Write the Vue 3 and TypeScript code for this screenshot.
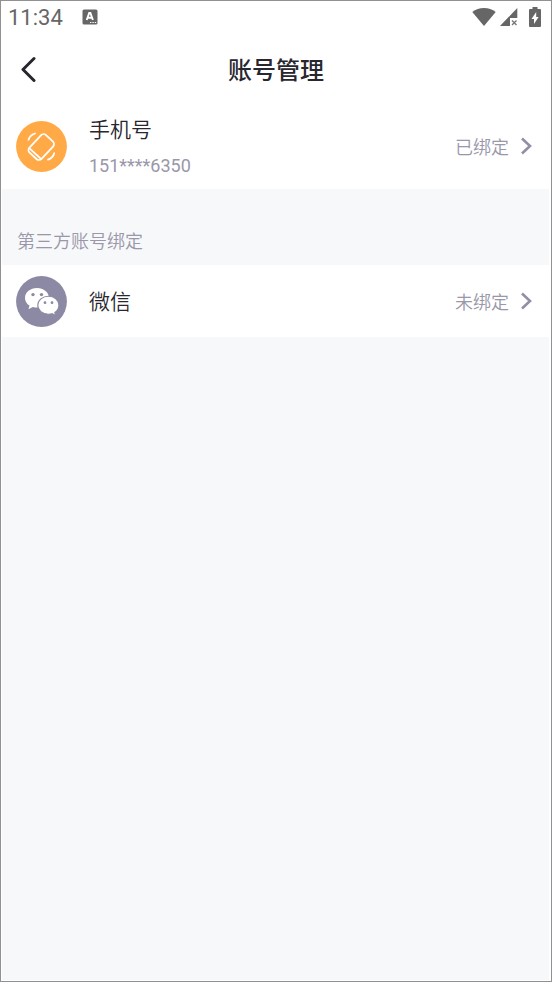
<script setup lang="ts">
interface AccountItem {
  id: 'phone' | 'wechat'
  name: string
  detail?: string
  status: string
}

const phone: AccountItem = { id: 'phone', name: '手机号', detail: '151****6350', status: '已绑定' }
const wechat: AccountItem = { id: 'wechat', name: '微信', status: '未绑定' }
</script>

<template>
  <div class="screen">
    <div class="status-bar">
      <time class="clock">11:34</time>
      <svg class="ime" viewBox="0 0 16 16" aria-hidden="true">
        <rect x="0.5" y="0.5" width="15" height="15" rx="1.5" fill="#666" />
        <path d="M4.700 11 7.200 4h1.200l2.500 7M5.700 8.800h4.200" fill="none" stroke="#fff" stroke-width="1.900" />
        <path d="M8 13h1.400v1H8zM10.400 13h1.400v1h-1.400zM12.800 13h1.400v1h-1.400z" fill="#fff" />
      </svg>
      <svg class="wifi" viewBox="0 0 24 18" aria-hidden="true">
        <path d="M12 18 .3 4C3.600 1.300 7.600 0 12 0s8.400 1.300 11.700 4z" fill="#666" />
      </svg>
      <svg class="signal" viewBox="0 0 18 18" aria-hidden="true">
        <path d="M17.300 0v10H10v8H0z" fill="#666" />
        <path d="m12 12.500 4.500 4.500m0-4.500L12 17" stroke="#777" stroke-width="1.400" />
      </svg>
      <svg class="battery" viewBox="0 0 12 20" aria-hidden="true">
        <path d="M3.500 0h5v2H11q1 0 1 1v16q0 1-1 1H1q-1 0-1-1V3q0-1 1-1h2.500z" fill="#666" />
        <path d="M7.200 5 2.500 12H5v5l4.600-7H7.200z" fill="#fff" />
      </svg>
    </div>

    <header class="nav">
      <button class="back" type="button" aria-label="返回">
        <svg viewBox="0 0 16 26" aria-hidden="true">
          <path d="M14 2.500 3 13.500l11 11" fill="none" stroke="#28272f" stroke-width="3" stroke-linecap="round" stroke-linejoin="round" />
        </svg>
      </button>
      <h1>账号管理</h1>
    </header>

    <main class="content">
      <button class="row row-tall" type="button">
        <svg class="avatar" viewBox="0 0 51 51" aria-hidden="true">
          <circle cx="25.500" cy="25.500" r="25.400" fill="#ffaa47" />
          <g fill="none" stroke="#fff" stroke-width="1.800" stroke-linecap="round" stroke-linejoin="round">
            <rect x="17" y="14" width="16.500" height="24" rx="3.600" transform="rotate(43 25.200 26)" />
            <path d="m13.500 27.300 11.500 10.500M12.500 18.700q1.400-4.600 6.500-6.200M38.200 32.200q-1.200 4.700-6.200 6.400" />
          </g>
        </svg>
        <span class="text">
          <span class="name">{{ phone.name }}</span>
          <span class="detail">{{ phone.detail }}</span>
        </span>
        <span class="state">{{ phone.status }}</span>
        <svg class="chevron" viewBox="0 0 12 18" aria-hidden="true">
          <path d="m2 1.500 8 7.500-8 7.500" fill="none" stroke="#918fa6" stroke-width="2.600" />
        </svg>
      </button>

      <h2>第三方账号绑定</h2>

      <button class="row" type="button">
        <svg class="avatar" viewBox="0 0 51 51" aria-hidden="true">
          <circle cx="25.500" cy="25.500" r="25.400" fill="#8b89a3" />
          <path d="M21 12c-6.700 0-12 4.300-12 9.900 0 3.200 1.700 5.900 4.500 7.700l-1 3.600 4.300-2.200c1.300.4 2.700.600 4.200.600 6.600 0 12-4.200 12-9.700S27.600 12 21 12z" fill="#fff" />
          <path d="M32.400 20.200c-5.900 0-10.600 4-10.600 9s4.700 9 10.600 9c1.300 0 2.500-.2 3.600-.500l3.700 1.900-.900-3.100c2.500-1.700 4.100-4.300 4.100-7.300 0-5-4.700-9-10.500-9z" fill="#fff" stroke="#8b89a3" stroke-width="1.100" />
          <g fill="#8b89a3">
            <circle cx="17" cy="18.600" r="1.700" />
            <circle cx="25.500" cy="18.600" r="1.700" />
            <circle cx="29" cy="26.700" r="1.400" />
            <circle cx="36" cy="26.700" r="1.400" />
          </g>
        </svg>
        <span class="text">
          <span class="name">{{ wechat.name }}</span>
        </span>
        <span class="state">{{ wechat.status }}</span>
        <svg class="chevron" viewBox="0 0 12 18" aria-hidden="true">
          <path d="m2 1.500 8 7.500-8 7.500" fill="none" stroke="#918fa6" stroke-width="2.600" />
        </svg>
      </button>
    </main>
  </div>
</template>

<style>
body {
  margin: 0;
  background: #fff;
}
</style>

<style scoped>
.screen {
  box-sizing: border-box;
  display: flex;
  flex-direction: column;
  min-height: 100vh;
  border: 1px solid #919191;
  background: #fff;
  color: #28272f;
  font-family: Roboto, "Noto Sans CJK SC", sans-serif;
}

.status-bar {
  display: flex;
  align-items: center;
  height: 32px;
  padding: 0 10px 0 7px;
}

.clock {
  margin-right: 19px;
  padding-top: 2px;
  color: #666;
  font-size: 22px;
  font-weight: 400;
  line-height: 30px;
}

.ime {
  width: 16px;
  height: 16px;
}

.wifi {
  width: 24px;
  height: 18px;
  margin-left: auto;
}

.signal {
  width: 18px;
  height: 18px;
  margin-left: 4px;
}

.battery {
  width: 12px;
  height: 20px;
  margin-left: 11px;
}

.nav {
  display: grid;
  grid-template-columns: 56px 1fr 56px;
  align-items: center;
  height: 72px;
}

button {
  margin: 0;
  border: 0;
  background: #fff;
  color: inherit;
  font: inherit;
  cursor: pointer;
}

.back {
  display: flex;
  align-items: center;
  height: 48px;
  padding: 0 19px;
}

.back svg {
  flex: none;
  width: 16px;
  height: 26px;
}

h1 {
  margin: 0;
  padding-top: 3px;
  font-size: 24px;
  font-weight: 500;
  line-height: 36px;
  text-align: center;
}

.content {
  flex: 1;
  margin: 0 2px 1px 1px;
  background: #f7f8fa;
}

.row {
  display: flex;
  align-items: center;
  width: 100%;
  height: 72px;
  padding: 0 17px 0 14px;
  text-align: left;
}

.row-tall {
  height: 84px;
  padding-bottom: 2px;
}

.avatar {
  flex: none;
  width: 51px;
  height: 51px;
}

.text {
  display: flex;
  flex: 1;
  flex-direction: column;
  gap: 8px;
  margin-left: 22px;
  padding-top: 2px;
}

.name {
  font-size: 21px;
  font-weight: 350;
  line-height: 30px;
}

.detail,
.state {
  color: #9997a9;
  font-size: 18px;
  font-weight: 350;
  line-height: 26px;
}

.detail {
  font-weight: 400;
}

.state {
  padding-top: 3px;
}

.chevron {
  flex: none;
  width: 12px;
  height: 18px;
  margin-left: 11px;
}

h2 {
  margin: 0;
  padding: 40px 15px 10px;
  color: #9997a9;
  font-size: 18px;
  font-weight: 350;
  line-height: 26px;
}
</style>
